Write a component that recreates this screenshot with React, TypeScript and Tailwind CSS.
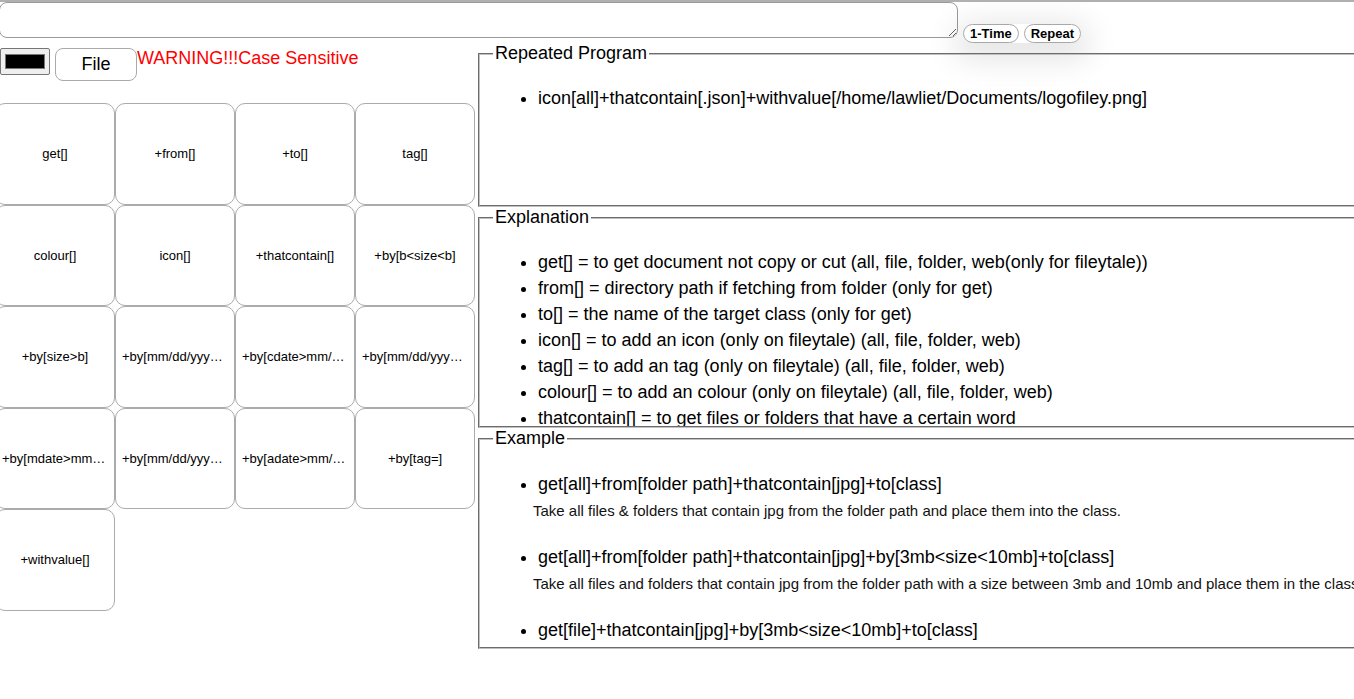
import React from "react";

const cards = [
  "get[]",
  "+from[]",
  "+to[]",
  "tag[]",
  "colour[]",
  "icon[]",
  "+thatcontain[]",
  "+by[b<size<b]",
  "+by[size>b]",
  "+by[mm/dd/yyyy<cdate<mm/dd/yyyy]",
  "+by[cdate>mm/dd/yyyy]",
  "+by[mm/dd/yyyy<mdate<mm/dd/yyyy]",
  "+by[mdate>mm/dd/yyyy]",
  "+by[mm/dd/yyyy<adate<mm/dd/yyyy]",
  "+by[adate>mm/dd/yyyy]",
  "+by[tag=]",
  "+withvalue[]",
];

const explanations = [
  "get[] = to get document not copy or cut (all, file, folder, web(only for fileytale))",
  "from[] = directory path if fetching from folder (only for get)",
  "to[] = the name of the target class (only for get)",
  "icon[] = to add an icon (only on fileytale) (all, file, folder, web)",
  "tag[] = to add an tag (only on fileytale) (all, file, folder, web)",
  "colour[] = to add an colour (only on fileytale) (all, file, folder, web)",
  "thatcontain[] = to get files or folders that have a certain word",
  "by[] = to filter files or folders by size, date or tag",
  "withvalue[] = the value to apply (icon path, tag name or colour)",
];

const examples = [
  {
    code: "get[all]+from[folder path]+thatcontain[jpg]+to[class]",
    desc: "Take all files & folders that contain jpg from the folder path and place them into the class.",
  },
  {
    code: "get[all]+from[folder path]+thatcontain[jpg]+by[3mb<size<10mb]+to[class]",
    desc: "Take all files and folders that contain jpg from the folder path with a size between 3mb and 10mb and place them in the class.",
  },
  {
    code: "get[file]+thatcontain[jpg]+by[3mb<size<10mb]+to[class]",
    desc: "Take all files that contain jpg with a size between 3mb and 10mb and place them in the class.",
  },
];

function Fieldset({
  title,
  heightClass,
  children,
}: {
  title: string;
  heightClass: string;
  children: React.ReactNode;
}) {
  return (
    <fieldset
      className={`w-[1000px] ${heightClass} overflow-hidden border-2 [border-style:groove] border-[#c0c0c0] m-0 px-[13px] pt-[6px] pb-[10px]`}
    >
      <legend className="px-[2px] text-[18px] leading-[21px]">{title}</legend>
      {children}
    </fieldset>
  );
}

export default function App() {
  return (
    <div className="w-[1354px] h-[699px] overflow-hidden bg-white text-black font-['Liberation_Sans',Arial,sans-serif] border-t-2 border-[#b0b0b0]">
      {/* Top bar */}
      <div className="flex items-start">
        <textarea className="-ml-[1px] w-[959px] h-[36px] border border-[#9a9a9a] rounded-[8px] bg-white shrink-0" />
        <div className="ml-[5px] mt-[22px] flex gap-[5px] rounded-full shadow-[0_8px_30px_10px_rgba(0,0,0,0.1)]">
          <button className="h-[19px] px-[6px] border border-[#a8a8a8] rounded-full bg-white text-[13px] leading-[15px] font-bold">
            1-Time
          </button>
          <button className="h-[19px] px-[6px] border border-[#a8a8a8] rounded-full bg-white text-[13px] leading-[15px] font-bold">
            Repeat
          </button>
        </div>
      </div>

      {/* Main */}
      <div className="flex items-start -ml-[5px]">
        {/* Left column */}
        <div className="w-[480px] shrink-0 mt-[5px]">
          <div className="flex items-start h-[33px]">
            <div className="ml-[5px] w-[50px] h-[27px] border border-[#767676] rounded-[2px] bg-[#efefef] px-[4px] py-[5px]">
              <div className="w-full h-full bg-black border border-[#777]" />
            </div>
            <button className="ml-[5px] w-[82px] h-[33px] border border-[#aaa] rounded-[8px] bg-white text-[18px] leading-[21px]">
              File
            </button>
            <span className="text-[18px] leading-[21px] text-[#ff0000] whitespace-nowrap">
              WARNING!!!Case Sensitive
            </span>
          </div>
          <div className="mt-[22px] grid grid-cols-4">
            {cards.map((c, i) => (
              <div
                key={i}
                className="h-[101.5px] border border-[#ababab] rounded-[10px] bg-white flex items-center justify-center px-[6px]"
              >
                <span className="text-[13px] leading-[15px] truncate">{c}</span>
              </div>
            ))}
          </div>
        </div>

        {/* Right column */}
        <div className="ml-[3px] flex flex-col shrink-0">
          <Fieldset title="Repeated Program" heightClass="h-[164px]">
            <ul className="list-disc pl-[45px] mt-[15px] text-[18px] leading-[26px]">
              <li>
                icon[all]+thatcontain[.json]+withvalue[/home/lawliet/Documents/logofiley.png]
              </li>
            </ul>
          </Fieldset>
          <Fieldset title="Explanation" heightClass="h-[221px]">
            <ul className="list-disc pl-[45px] mt-[15px] text-[18px] leading-[26px]">
              {explanations.map((e, i) => (
                <li key={i}>{e}</li>
              ))}
            </ul>
          </Fieldset>
          <Fieldset title="Example" heightClass="h-[221px]">
            <ul className="list-disc pl-[45px] mt-[16px] text-[18px] leading-[26px]">
              {examples.map((e, i) => (
                <li key={i} className="mb-[25px]">
                  {e.code}
                  <div className="-ml-[5px] mt-[5px] text-[15px] leading-[17px] text-[#111] whitespace-nowrap">
                    {e.desc}
                  </div>
                </li>
              ))}
            </ul>
          </Fieldset>
        </div>
      </div>
    </div>
  );
}
